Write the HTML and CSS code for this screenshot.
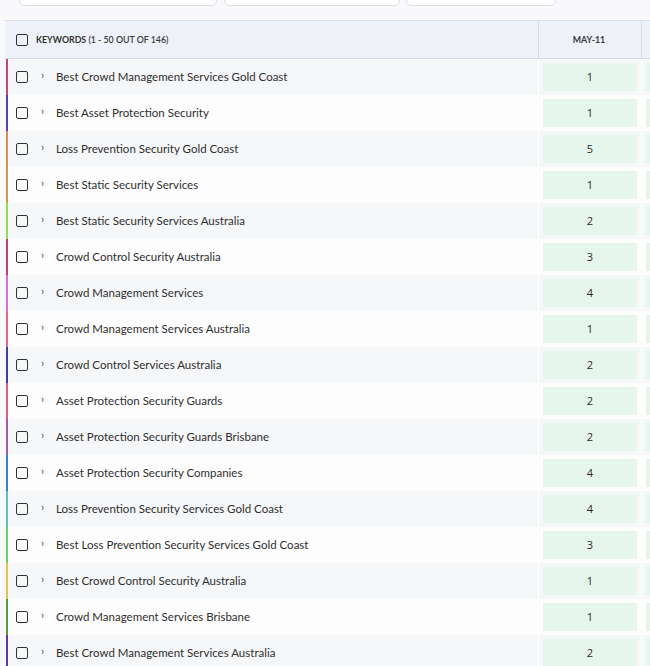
FILE: index.html
```html
<!DOCTYPE html>
<html>
<head>
<meta charset="utf-8">
<link rel="stylesheet" href="styles.css">
</head>
<body>
<div class="toolbar">
  <div class="inputs">
    <div class="input in1"></div>
    <div class="input in2"></div>
    <div class="input in3"></div>
  </div>
</div>
<div class="table">
  <div class="head">
    <div class="hcell kwh"><span class="box"></span><span class="htitle"><b>Keywords</b> (1 - 50 out of 146)</span></div>
    <div class="hcell dateh">May-11</div>
    <div class="hcell nexth"></div>
  </div>
  <div class="rows">
    <div class="row"><div class="kw"><span class="bar" style="background:#c4477c"></span><span class="box"></span><span class="chev">›</span><span class="name">Best Crowd Management Services Gold Coast</span></div><div class="rank"><span class="pill">1</span></div><div class="next"><span class="pill2"></span></div></div>
    <div class="row"><div class="kw"><span class="bar" style="background:#5b40b3"></span><span class="box"></span><span class="chev">›</span><span class="name">Best Asset Protection Security</span></div><div class="rank"><span class="pill">1</span></div><div class="next"><span class="pill2"></span></div></div>
    <div class="row"><div class="kw"><span class="bar" style="background:#e3885c"></span><span class="box"></span><span class="chev">›</span><span class="name">Loss Prevention Security Gold Coast</span></div><div class="rank"><span class="pill">5</span></div><div class="next"><span class="pill2"></span></div></div>
    <div class="row"><div class="kw"><span class="bar" style="background:#d49a4c"></span><span class="box"></span><span class="chev">›</span><span class="name">Best Static Security Services</span></div><div class="rank"><span class="pill">1</span></div><div class="next"><span class="pill2"></span></div></div>
    <div class="row"><div class="kw"><span class="bar" style="background:#8fe052"></span><span class="box"></span><span class="chev">›</span><span class="name">Best Static Security Services Australia</span></div><div class="rank"><span class="pill">2</span></div><div class="next"><span class="pill2"></span></div></div>
    <div class="row"><div class="kw"><span class="bar" style="background:#c43f74"></span><span class="box"></span><span class="chev">›</span><span class="name">Crowd Control Security Australia</span></div><div class="rank"><span class="pill">3</span></div><div class="next"><span class="pill2"></span></div></div>
    <div class="row"><div class="kw"><span class="bar" style="background:#d570e0"></span><span class="box"></span><span class="chev">›</span><span class="name">Crowd Management Services</span></div><div class="rank"><span class="pill">4</span></div><div class="next"><span class="pill2"></span></div></div>
    <div class="row"><div class="kw"><span class="bar" style="background:#d86c8c"></span><span class="box"></span><span class="chev">›</span><span class="name">Crowd Management Services Australia</span></div><div class="rank"><span class="pill">1</span></div><div class="next"><span class="pill2"></span></div></div>
    <div class="row"><div class="kw"><span class="bar" style="background:#3c409e"></span><span class="box"></span><span class="chev">›</span><span class="name">Crowd Control Services Australia</span></div><div class="rank"><span class="pill">2</span></div><div class="next"><span class="pill2"></span></div></div>
    <div class="row"><div class="kw"><span class="bar" style="background:#e05c8e"></span><span class="box"></span><span class="chev">›</span><span class="name">Asset Protection Security Guards</span></div><div class="rank"><span class="pill">2</span></div><div class="next"><span class="pill2"></span></div></div>
    <div class="row"><div class="kw"><span class="bar" style="background:#9c60a2"></span><span class="box"></span><span class="chev">›</span><span class="name">Asset Protection Security Guards Brisbane</span></div><div class="rank"><span class="pill">2</span></div><div class="next"><span class="pill2"></span></div></div>
    <div class="row"><div class="kw"><span class="bar" style="background:#3080d8"></span><span class="box"></span><span class="chev">›</span><span class="name">Asset Protection Security Companies</span></div><div class="rank"><span class="pill">4</span></div><div class="next"><span class="pill2"></span></div></div>
    <div class="row"><div class="kw"><span class="bar" style="background:#60c2c0"></span><span class="box"></span><span class="chev">›</span><span class="name">Loss Prevention Security Services Gold Coast</span></div><div class="rank"><span class="pill">4</span></div><div class="next"><span class="pill2"></span></div></div>
    <div class="row"><div class="kw"><span class="bar" style="background:#6dcc6b"></span><span class="box"></span><span class="chev">›</span><span class="name">Best Loss Prevention Security Services Gold Coast</span></div><div class="rank"><span class="pill">3</span></div><div class="next"><span class="pill2"></span></div></div>
    <div class="row"><div class="kw"><span class="bar" style="background:#e2c44c"></span><span class="box"></span><span class="chev">›</span><span class="name">Best Crowd Control Security Australia</span></div><div class="rank"><span class="pill">1</span></div><div class="next"><span class="pill2"></span></div></div>
    <div class="row"><div class="kw"><span class="bar" style="background:#5c9a40"></span><span class="box"></span><span class="chev">›</span><span class="name">Crowd Management Services Brisbane</span></div><div class="rank"><span class="pill">1</span></div><div class="next"><span class="pill2"></span></div></div>
    <div class="row"><div class="kw"><span class="bar" style="background:#5b3ba2"></span><span class="box"></span><span class="chev">›</span><span class="name">Best Crowd Management Services Australia</span></div><div class="rank"><span class="pill">2</span></div><div class="next"><span class="pill2"></span></div></div>
  </div>
</div>
</body>
</html>
```
FILE: styles.css
```css
html, body {
  margin: 0;
  padding: 0;
  background: #f9f9fc;
  font-family: Lato, "Open Sans", sans-serif;
  color: #333;
  overflow: hidden;
}
.toolbar {
  height: 20px;
  overflow: hidden;
}
.inputs {
  display: flex;
  margin-top: -24px;
  padding-left: 19px;
}
.input {
  background: #fff;
  border: 1px solid #dcdfe5;
  border-radius: 5px;
  box-sizing: border-box;
  height: 30px;
}
.in1 { width: 198px; margin-right: 7px; }
.in2 { width: 176px; margin-right: 6px; }
.in3 { width: 150px; }
.table {
  margin-left: 6px;
}
.head {
  display: flex;
  height: 39px;
  box-sizing: border-box;
  background: #eef1f8;
  border-top: 1px solid #dadee6;
  border-bottom: 1px solid #d6dae2;
  margin-left: -1px;
}
.hcell {
  display: flex;
  align-items: center;
  box-sizing: border-box;
}
.kwh {
  width: 533px;
  padding-left: 11px;
}
.htitle {
  font-size: 8.8px;
  text-transform: uppercase;
  color: #3a3a3a;
  margin-left: 8px;
  font-weight: 600;
  padding-bottom: 1px;
}
.htitle b {
  font-weight: 700;
  color: #333;
}
.dateh {
  width: 104px;
  justify-content: center;
  border-left: 1px solid #d6dae2;
  border-right: 1px solid #d6dae2;
  font-size: 8.8px;
  font-weight: 700;
  text-transform: uppercase;
  color: #3a3a3a;
  padding-right: 2px;
  padding-bottom: 1px;
}
.nexth {
  flex: 1;
}
.box {
  width: 12px;
  height: 12px;
  box-sizing: border-box;
  border: 1.6px solid #333;
  border-radius: 2px;
  flex: none;
}
.row {
  display: flex;
  height: 36px;
}
.row:nth-child(odd) { background: #f6f7f9; }
.row:nth-child(even) { background: #fdfdfe; }
.kw {
  width: 532px;
  display: flex;
  align-items: center;
}
.bar {
  width: 2px;
  height: 36px;
  flex: none;
  margin-right: 8px;
}
.chev {
  font-size: 11px;
  color: #444;
  margin-left: 13px;
  width: 15px;
  line-height: 1;
  position: relative;
  top: -3px;
}
.name {
  font-size: 11.5px;
  color: #2f2f2f;
  position: relative;
  top: -1px;
}
.rank {
  width: 104px;
  box-sizing: border-box;
  padding: 4px;
  display: flex;
  border-left: 1px solid #fff;
  border-right: 1px solid #fff;
}
.pill {
  flex: 1;
  background: #e6f6ec;
  display: flex;
  align-items: center;
  justify-content: center;
  font-family: "Open Sans", sans-serif;
  font-size: 11px;
  color: #2a2a2a;
  padding-bottom: 1px;
}
.next {
  flex: 1;
  padding: 4px 0 4px 4px;
  display: flex;
}
.pill2 {
  flex: 1;
  background: #e6f6ec;
}
```
